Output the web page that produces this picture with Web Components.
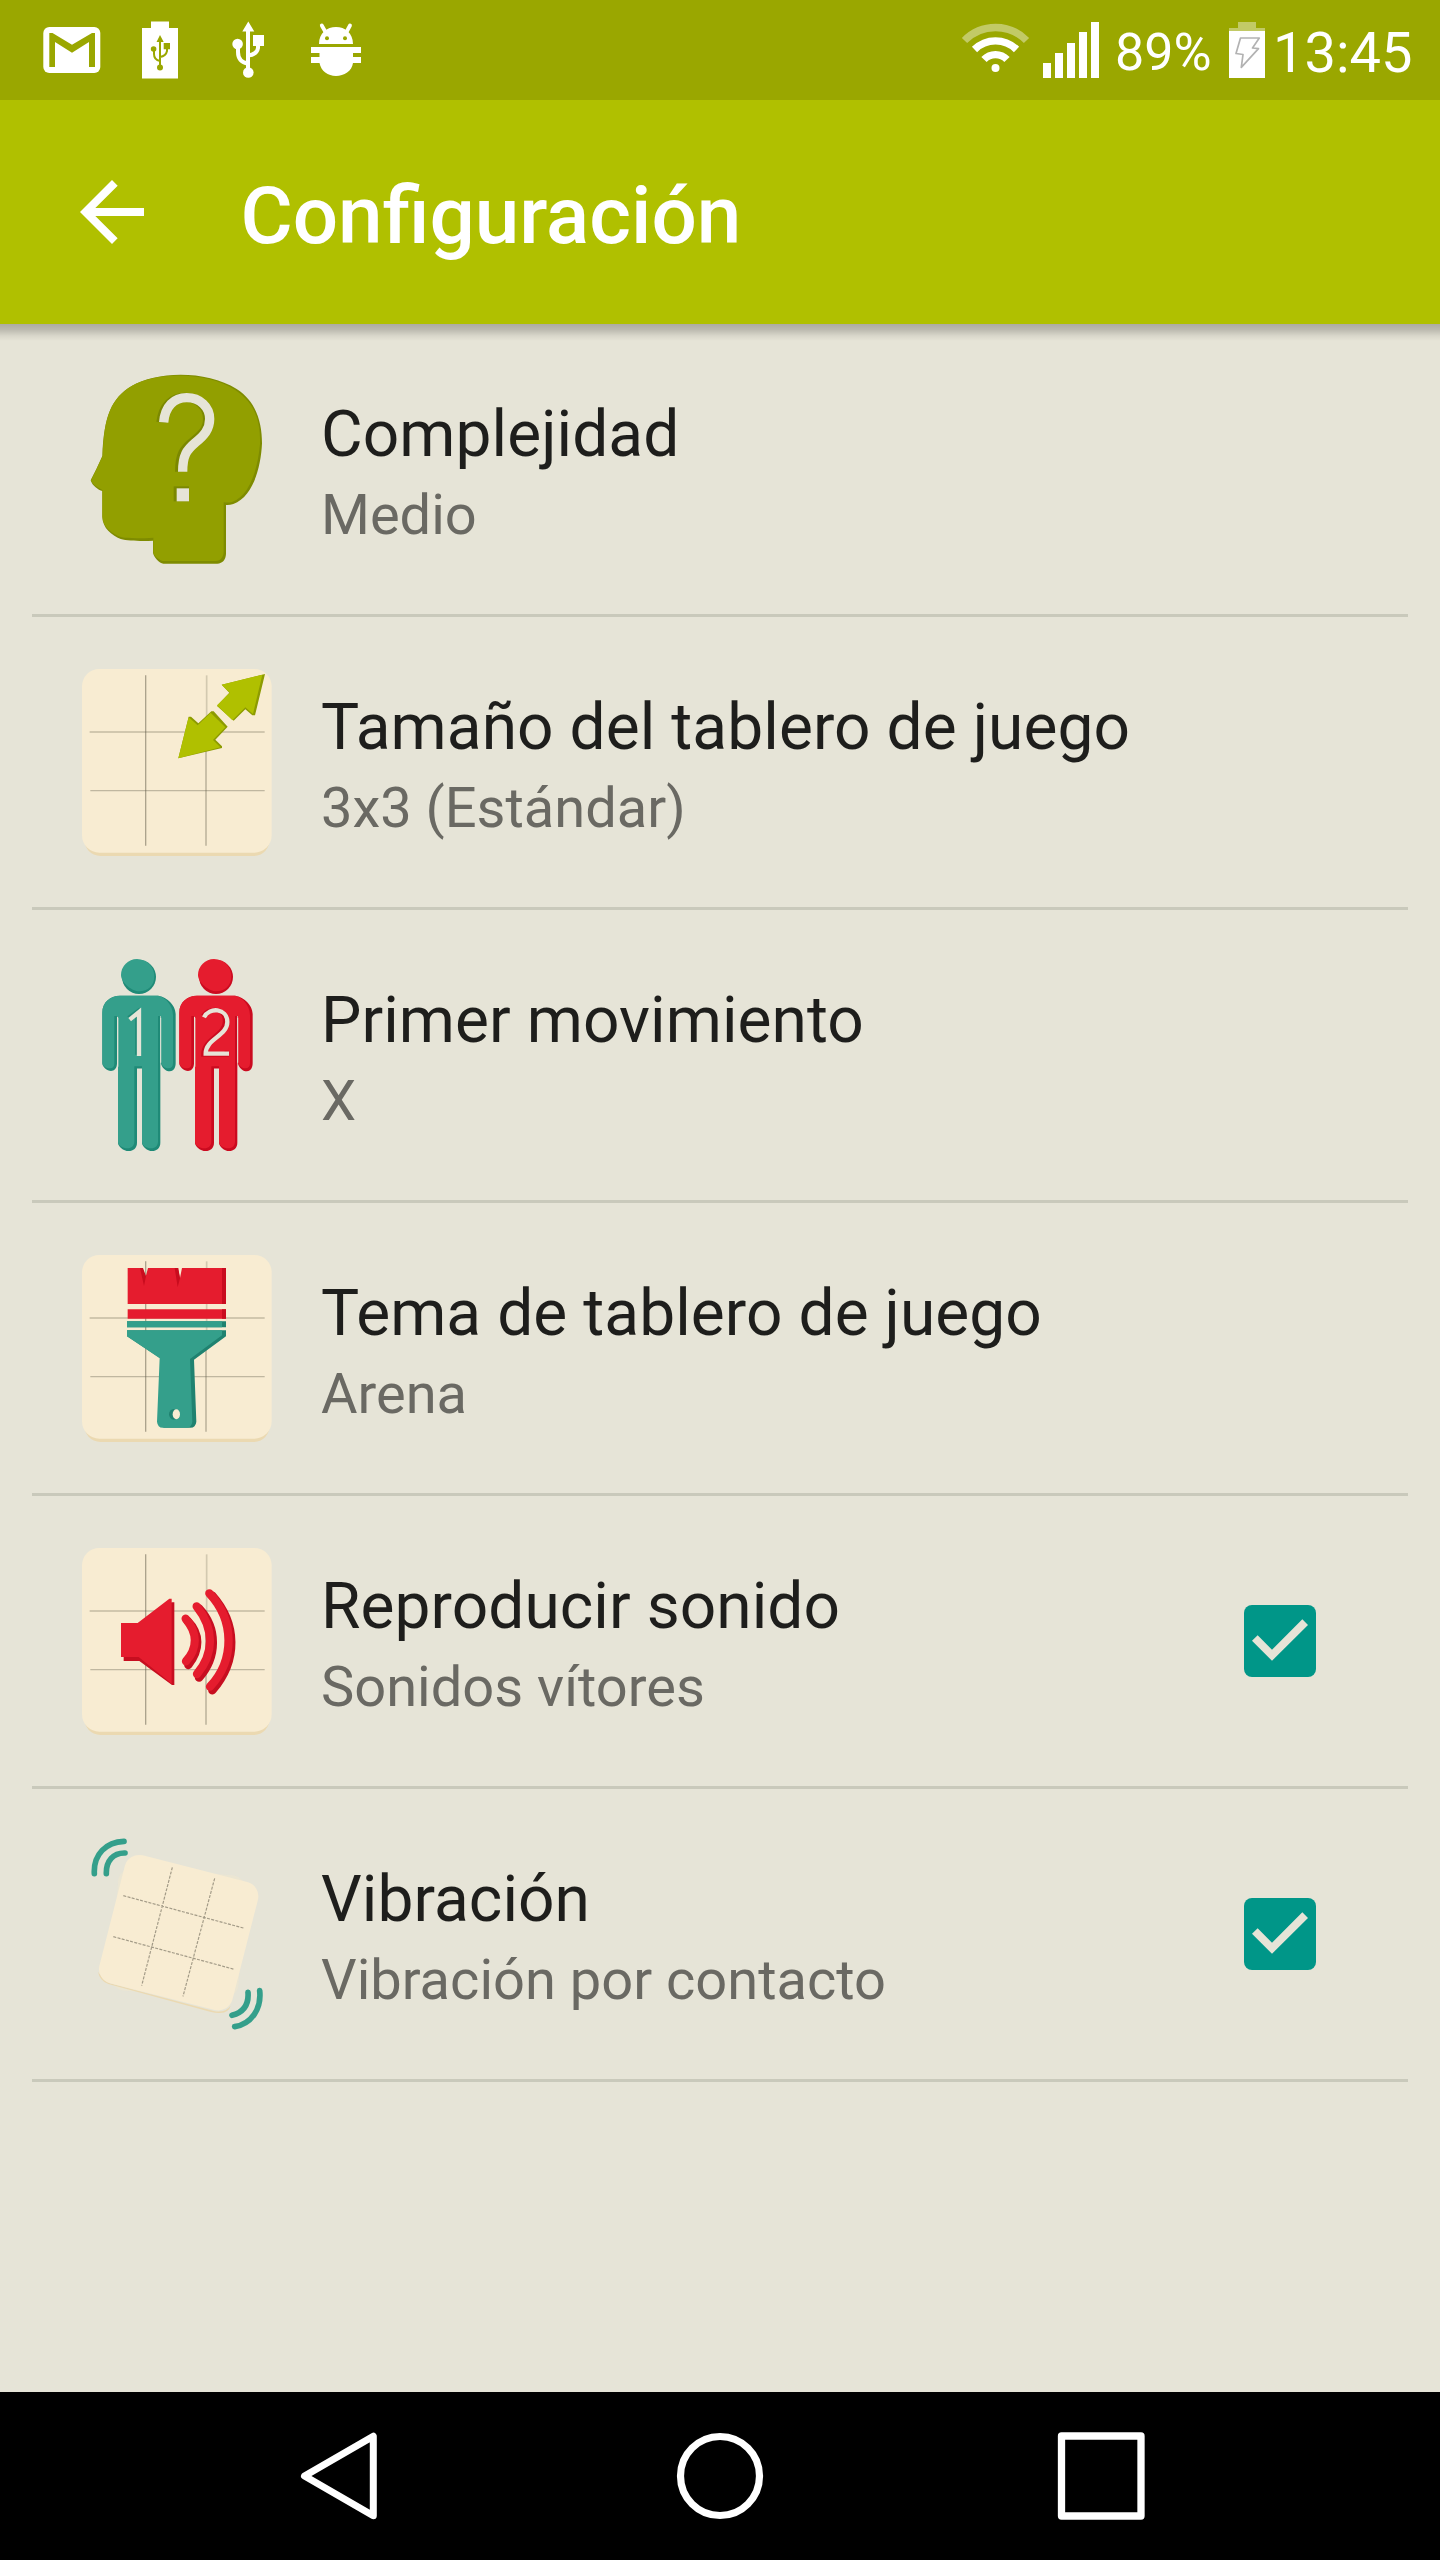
<!DOCTYPE html>
<html lang="es">
<head>
<meta charset="utf-8">
<title>Configuración</title>
<style>
html,body{margin:0;padding:0}
body{font-family:Roboto,sans-serif;background:#e6e4d7}
</style>
</head>
<body>
<settings-screen></settings-screen>
<script>
function define(name, html) {
  const tpl = document.createElement('template');
  tpl.innerHTML = html;
  customElements.define(name, class extends HTMLElement {
    constructor() {
      super();
      this.attachShadow({ mode: 'open' }).appendChild(tpl.content.cloneNode(true));
    }
  });
}

/* Tile with a 3x3 grid, shared by several preference icons */
const board = `
  <path d="M70 200V658Q76 716 122 717H580Q626 716 632 658V200Z" fill="#ebd9b1"/>
  <rect x="66" y="156" width="569" height="551" rx="52" fill="#f8ecd2"/>
  <g stroke="#5f5a48" fill="none">
    <path d="M257 175V686" stroke-width="4" opacity=".5"/>
    <path d="M440 175V400" stroke-width="5" opacity=".24"/>
    <path d="M438 400V686" stroke-width="4.5" opacity=".4"/>
    <path d="M89 345H614" stroke-width="5" opacity=".34"/>
    <path d="M91 521H614" stroke-width="4" opacity=".36"/>
  </g>`;

const person = (light, dark) => `
  <circle cx="237" cy="141" r="51" fill="${dark}"/>
  <path d="M183 135A48 48 0 0 1 231 87C262 87 283 112 283 139C283 166 264 184 237 184C218 184 183 160 183 135Z" fill="${light}"/>
  <path fill="${dark}" d="M127 248C127 217 150 197 180 197H290C315 197 347 222 347 252V400C347 415 339 424 330 424C316 424 303 410 303 398V258H301V638C301 654 290 663 276 663C262 663 246 649 246 638V416H231V638C231 654 220 663 206 663C190 663 174 649 174 638V260H171V400C171 416 162 423 153 423C141 423 127 411 127 400Z"/>
  <path fill="${light}" d="M127 248C127 217 150 197 180 197H290C312 197 339 224 339 256V400C339 410 334 415 325 415C314 415 303 405 303 395V258H294V634C294 648 286 655 274 655C260 655 246 647 246 636V409H223V634C223 648 215 655 202 655C189 655 174 647 174 636V258H163V400C163 411 158 415 149 415C139 415 127 408 127 398Z"/>
  <path d="M173.500 263V410M302 263V398" stroke="#e6e4d7" stroke-width="3.500" opacity=".85"/>
  <path d="M238.500 416V640" stroke="#e6e4d7" stroke-width="15"/>`;

const art = {
  head: `<g transform="translate(0 78)">
    <path fill="#7e8b00" d="M127 318C132 195 155 145 215 108C290 63 440 60 530 117C590 155 606 220 606 280C603 350 580 440 520 462Q508 466 498 465V612C497 630 488 640 472 641H310C298 639 281 622 279 608V572C250 574 205 573 182 567C155 555 128 535 127 500V423C115 420 97 408 92 391Q110 357 127 318Z"/>
    <path fill="#929f00" d="M128 318C132 195 155 145 215 108C290 64 440 64 526 120C586 160 602 215 600 282C594 350 572 436 516 456Q506 459 491 457V606C490 622 482 632 468 633H308C296 629 281 618 280 606V563C250 565 205 566 185 562C155 551 128 530 127 500V420C115 414 97 404 93 391Q110 357 128 318Z"/>
    <path fill="none" stroke="#7b8800" stroke-width="28" d="M303 217C309 167 338 142 374 142C414 142 443 171 443 206C443 238 426 254 400 274C372 296 359 314 359 365"/>
    <path fill="none" stroke="#e6e4d7" stroke-width="28" d="M311 217C315 169 342 143 380 143C420 143 449 171 449 207C449 238 432 257 406 278C380 300 368 316 368 365"/>
    <path fill="#7b8800" d="M341 409H387V454H341Z"/><path fill="#e6e4d7" d="M350 415H387V454H350Z"/></g>`,
  size: board + `<g transform="translate(0 69)">
    <g fill="#8d9b00"><path d="M485 134L615 102L585 226H577L556 208L521 242L471 198L508 158Z"/><path d="M386 230H393L415 250L454 214H461L503 260L466 299L486 319V324L355 355Z"/></g>
    <g fill="#b0c000"><path d="M485 134L607 104L579 222L556 202L517 241L471 196L509 158Z"/><path d="M386 232L413 256L452 218L496 262L459 300L481 322L355 355Z"/></g></g>`,
  players: `<g transform="translate(0 60)">${person('#349f8b', '#1f8a77')}<g transform="translate(231)">${person('#e51c2e', '#cb0a1f')}</g>
    <g fill="none" stroke-width="13">
      <path stroke="#1f8a77" d="M206 264L232 245V374"/><path stroke="#e6e4d7" d="M209 269L237 246V378"/>
      <path stroke="#cb0a1f" d="M429 257C443 235 495 228 495 274C495 315 430 326 430 374H500V362"/>
      <path stroke="#e6e4d7" d="M432 262C447 230 502 234 502 276C502 318 437 327 437 371H507"/>
    </g></g>`,
  theme: board + `<g transform="translate(0 81)">
    <path fill="#e51c2e" d="M203 114H247L257 140L264 114H353L360 144L366 114H498V222H203ZM203 238H498V266H203Z"/>
    <path fill="#c90c1e" d="M240 114H249L258 139L252 168ZM344 114H355L360 145L353 172ZM486 114H498V222H486ZM486 238H498V266H486Z"/>
    <path fill="#1f8270" d="M201 274H498V292H201ZM201 301H498V319L402 389L409 575Q407 593 391 593H310L300 384L201 319Z"/>
    <path fill="#349f8b" d="M201 274H486V292H201ZM201 301H486V316L390 387L397 575Q395 593 379 593H308Q293 593 291 575L299 385L201 319Z"/>
    <ellipse cx="341" cy="553" rx="14" ry="16" fill="#1f8270"/><ellipse cx="349" cy="553" rx="11" ry="15" fill="#f8ecd2"/></g>`,
  sound: board + `<g transform="translate(0 72)">
    <path fill="#c70e20" d="M191 318H239L335 247H343V495H336L238 423H191Z"/>
    <path fill="#e51c2e" d="M183 309H233L328 236H335V491L236 411H183Z"/>
    <g fill="none" stroke-linecap="round" stroke-width="25"><g stroke="#c70e20">
      <path d="M383 303C421 342 421 389 385 435M417 265C473 325 472 410 417 473M456 226C531 310 535 420 457 511"/></g>
      <g stroke="#e51c2e"><path d="M377 296C413 338 413 384 378 424M410 259C464 326 462 402 411 462M448 220C524 301 525 420 450 500"/></g></g></g>`,
  vibration: `<g transform="translate(0 63)">
    <rect x="-191" y="-184" width="382" height="368" rx="42" transform="translate(355 369) rotate(4)" fill="#eee7d1" opacity=".65"/>
    <path d="M133 510Q145 520 160 523L461 603Q495 610 512 587Q507 607 480 609Q470 610 450 605L145 522Q119 512 114 485Z" fill="#ebd9b1"/>
    <rect x="-206" y="-198" width="412" height="396" rx="44" transform="translate(356 368) rotate(14.300)" fill="#f8ecd2"/>
    <g stroke="#4e4a3d" stroke-width="3.500" stroke-dasharray="9 4" opacity=".5"><path d="M337 172L245 527M464 205L369 559M190 257L554 355M160 380L523 478"/></g>
    <g fill="none" stroke="#349f8b" stroke-width="17" stroke-linecap="round"><path d="M103 191C100 132 139 96 192 94M139 191C138 153 160 128 195 129M564 547C567 585 549 607 516 616M599 542C605 595 575 642 524 650"/></g></g>`
};
customElements.define('pref-icon', class extends HTMLElement {
  connectedCallback() {
    const root = this.shadowRoot || this.attachShadow({ mode: 'open' });
    root.innerHTML = `<style>:host{display:block;width:240px;height:290px}svg{display:block}</style>
      <svg width="240" height="290" viewBox="0 0 720 870" aria-hidden="true">${art[this.getAttribute('name')]}</svg>`;
  }
});

define('check-box', `
<style>:host{display:block;width:72px;height:72px}svg{display:block}</style>
<svg width="72" height="72" viewBox="0 0 216 216"><rect width="216" height="216" rx="24" fill="#009688"/><path fill="#e6e4d7" d="M41 91L84 134L175 43L192 60L84 167L24 107Z"/></svg>`);

define('pref-item', `
<style>
:host{display:flex;box-sizing:border-box;width:1376px;height:293px;margin:0 32px;padding:0 92px 0 28px;border-bottom:3px solid #c9c9bb;align-items:center}
.text{align-self:flex-start;flex:1;display:flex;flex-direction:column;gap:10px;padding:73px 0 0 21px;white-space:nowrap}
.title{font-size:64px;line-height:75px;color:#1e1e1c;letter-spacing:.07px}
.summary{font-size:56px;line-height:66px;color:#6a6963}
</style>
<slot name="icon"></slot>
<div class="text"><div class="title"><slot></slot></div><div class="summary"><slot name="summary"></slot></div></div>
<slot name="widget"></slot>`);

define('status-bar', `
<style>
:host{display:flex;justify-content:space-between;height:100px;background:#9aa700;color:#fff;box-sizing:border-box;padding:0 28px 0 40px}
.group{display:flex}
svg{display:block;flex:none}
.percent{font-size:52px;line-height:61px;padding-top:22px;width:114px;white-space:nowrap}
.clock{font-size:56px;line-height:66px;padding-top:20px;width:139px;white-space:nowrap}
</style>
<div class="group">
<svg width="64" height="100" viewBox="40 0 64 100"><rect x="43.300" y="27" width="57" height="46" rx="6" fill="#fff"/><path fill="#9aa700" d="M49.300 33H52.500L72 44.800L92 33H95V67H89V42L72 52.800L55 42V67H49.300Z"/></svg>
<svg width="120" height="100" viewBox="104 0 120 100"><path fill="#fff" d="M142 28H151V21.500H169V28H178V78.500H142Z"/><g fill="none" stroke="#9aa700" stroke-width="2"><path d="M160 39V67M154 50V54Q154 60 160 61M167 49V51Q166 56 160 57"/></g><path fill="#9aa700" d="M156.500 42L160 35L163.700 42ZM163.700 43H170V49.300H163.700Z"/><circle cx="153.600" cy="49" r="2.800" fill="#9aa700"/><circle cx="160" cy="67.500" r="3" fill="#9aa700"/></svg>
<svg width="72" height="100" viewBox="224 0 72 100"><g fill="none" stroke="#fff" stroke-width="4"><path d="M248 29V70M238 46V52Q238 62 248 63.500M258 44V48Q257 54.500 248 55.500"/></g><path fill="#fff" d="M242.300 31.500L248.300 21.500L254.300 31.500ZM253 35H264V46H253Z"/><circle cx="237.600" cy="44" r="5.300" fill="#fff"/><circle cx="248.300" cy="72.500" r="5.300" fill="#fff"/></svg>
<svg width="72" height="100" viewBox="296 0 72 100"><path fill="#fff" d="M319 44C319 33 327 27 336 27S353 33 353 44ZM311 47H361V53H353V57H361V63H353C352 71 344 76 336 76S321 71 319.500 63H311V57H319.500V53H311Z"/><path d="M321.800 25.500L325.500 32M350 25.500L346.500 32" stroke="#fff" stroke-width="3.800" stroke-linecap="round"/><circle cx="327" cy="38.300" r="2" fill="#9aa700"/><circle cx="345" cy="38.300" r="2" fill="#9aa700"/></svg>
</div>
<div class="group">
<svg width="155" height="100" viewBox="960 0 155 100"><g fill="none" stroke="#fff" stroke-width="7.400"><path d="M964.500 40.500A43.500 43.500 0 0 1 1026.500 40.500" opacity=".4"/><path d="M974.500 49.500A29.800 29.800 0 0 1 1016.500 49.500M984 59.500A16 16 0 0 1 1007 59.500"/></g><circle cx="995.500" cy="68" r="4" fill="#fff"/><path fill="#fff" d="M1043 63H1051V78H1043ZM1055 53H1063V78H1055ZM1067 43H1075V78H1067ZM1079 32H1087V78H1079ZM1091 22H1099V78H1091Z"/></svg>
<span class="percent">89%</span>
<svg width="44" height="100" viewBox="1229 0 44 100"><path fill="#fff" opacity=".4" d="M1238 22H1256V28H1265V31H1229V28H1238Z"/><path fill="#fff" d="M1229 31H1265V78H1229Z"/><path fill="none" stroke="#b2b2b2" stroke-width="1.700" stroke-linejoin="round" d="M1240.500 38H1259.300L1252.500 48L1258.500 48.700L1241.300 67.300L1243 54.500L1236 53.500Z"/></svg>
<span class="clock">13:45</span>
</div>`);

define('app-bar', `
<style>
:host{display:flex;position:relative;z-index:1;height:224px;box-sizing:border-box;padding:64px 0 0 64px;background:#b0c000;color:#fff}
:host::after{content:"";position:absolute;left:0;right:0;top:224px;height:17px;background:linear-gradient(rgba(0,0,0,.25),rgba(0,0,0,.19) 32%,rgba(0,0,0,.06) 70%,transparent)}
svg{display:block}
h1{margin:0;padding:5px 0 0 80.500px;font-size:80px;line-height:94px;font-weight:500}
</style>
<svg width="96" height="96" viewBox="0 0 24 24"><path fill="#fff" d="M20 11H7.830l5.590-5.590L12 4l-8 8 8 8 1.410-1.410L7.830 13H20z"/></svg>
<h1><slot></slot></h1>`);

define('nav-bar', `
<style>:host{display:flex;height:168px;background:#000;justify-content:space-between;padding:0 288px}svg{display:block}</style>
<svg width="96" height="168" viewBox="288 2392 96 168"><path d="M304.500 2476L373.300 2436.200V2515.800Z" fill="none" stroke="#fff" stroke-width="7" stroke-linejoin="round"/></svg>
<svg width="96" height="168" viewBox="672 2392 96 168"><circle cx="720" cy="2476" r="39.500" fill="none" stroke="#fff" stroke-width="7.200"/></svg>
<svg width="96" height="168" viewBox="1056 2392 96 168"><rect x="1061.500" y="2436" width="79.500" height="80" fill="none" stroke="#fff" stroke-width="7.300" stroke-linejoin="round"/></svg>`);

define('settings-screen', `
<style>:host{display:flex;flex-direction:column;width:1440px;height:2560px;overflow:hidden;background:#e6e4d7}main{flex:1}</style>
<status-bar></status-bar>
<app-bar>Configuración</app-bar>
<main>
<pref-item><pref-icon slot="icon" name="head"></pref-icon>Complejidad<span slot="summary">Medio</span></pref-item>
<pref-item><pref-icon slot="icon" name="size"></pref-icon>Tamaño del tablero de juego<span slot="summary">3x3 (Estándar)</span></pref-item>
<pref-item><pref-icon slot="icon" name="players"></pref-icon>Primer movimiento<span slot="summary">X</span></pref-item>
<pref-item><pref-icon slot="icon" name="theme"></pref-icon>Tema de tablero de juego<span slot="summary">Arena</span></pref-item>
<pref-item><pref-icon slot="icon" name="sound"></pref-icon>Reproducir sonido<span slot="summary">Sonidos vítores</span><check-box slot="widget"></check-box></pref-item>
<pref-item><pref-icon slot="icon" name="vibration"></pref-icon>Vibración<span slot="summary">Vibración por contacto</span><check-box slot="widget"></check-box></pref-item>
</main>
<nav-bar></nav-bar>`);
</script>
</body>
</html>
